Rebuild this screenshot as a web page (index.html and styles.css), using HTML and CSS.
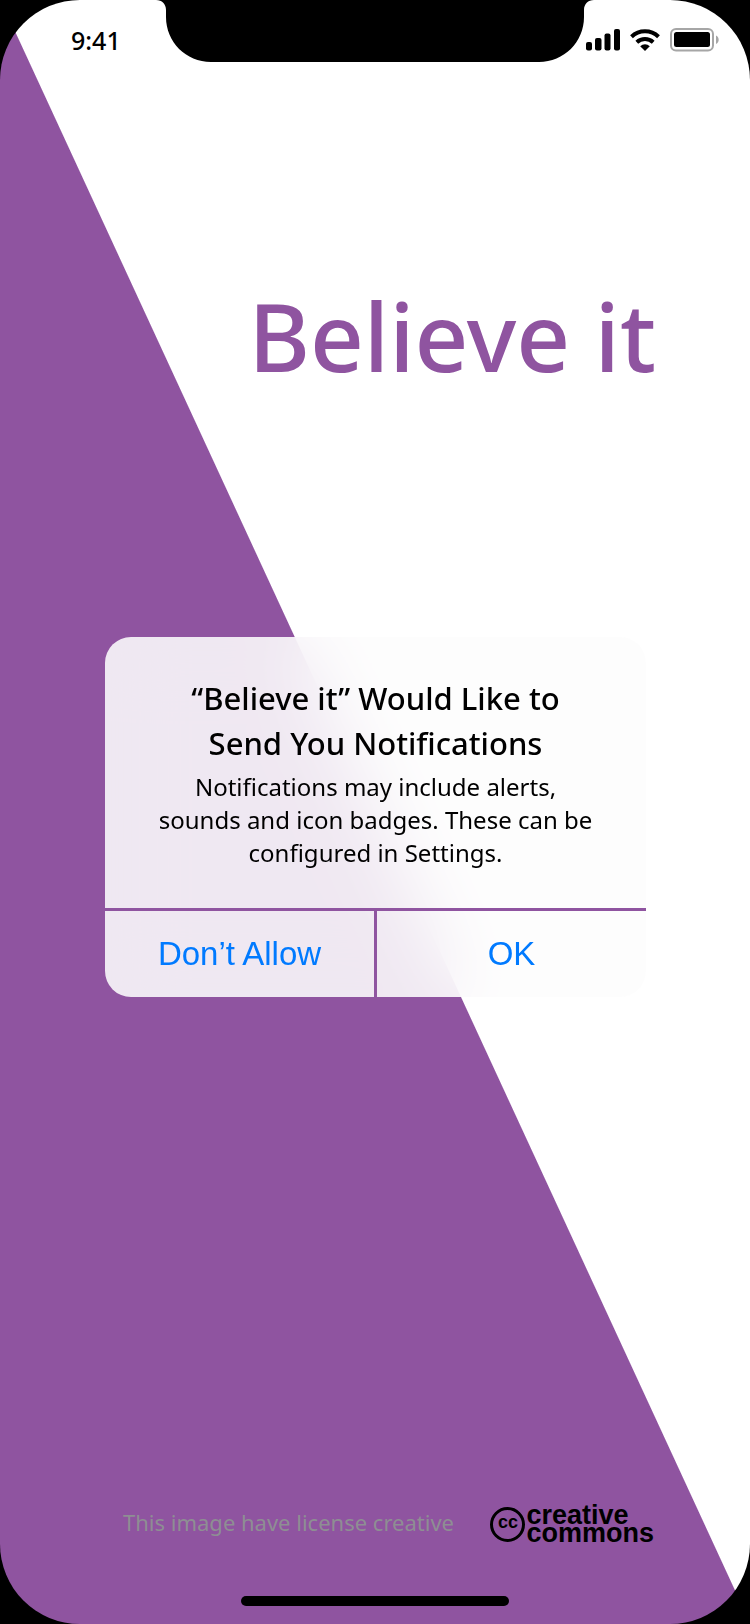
FILE: index.html
```html
<!DOCTYPE html>
<html lang="en">
<head>
<meta charset="utf-8">
<meta name="viewport" content="width=device-width, initial-scale=1">
<title>Believe it</title>
<link rel="stylesheet" href="styles.css">
</head>
<body>
<div class="screen">
  <svg class="notch" viewBox="0 0 438 62" aria-hidden="true">
    <path d="M0 0C6 0 10 4 10 10V17C10 42 30 62 55 62H383C408 62 428 42 428 17V10C428 4 432 0 438 0Z"/>
  </svg>
  <header class="status">
    <time class="clock">9:41</time>
    <div class="indicators">
      <svg class="signal" viewBox="0 0 34 22" aria-label="Signal">
        <rect x="0" y="13" width="6" height="8.500" rx="2"/>
        <rect x="9" y="9" width="6.500" height="12.500" rx="2"/>
        <rect x="18.500" y="4.500" width="6" height="17" rx="2"/>
        <rect x="28" y="0" width="6" height="21.500" rx="2"/>
      </svg>
      <svg class="wifi" viewBox="0 0 30 22" aria-label="Wi-Fi">
        <path class="arc" d="M1.500 7.700A19.500 19.500 0 0 1 28.500 7.700M6.800 13.200A12 12 0 0 1 23.200 13.200"/>
        <path d="M10.200 17.200A7.200 7.200 0 0 1 19.800 17.200L15 22Z"/>
      </svg>
      <svg class="battery" viewBox="0 0 49 24" aria-label="Battery">
        <rect class="shell" x="1" y="1" width="42" height="21.500" rx="5"/>
        <rect x="4" y="4" width="36" height="15" rx="2.500"/>
        <path class="cap" d="M46 7.500C49.600 9 49.600 14.500 46 16Z"/>
      </svg>
    </div>
  </header>
  <h1 class="brand">Believe it</h1>
  <section class="dialog" role="alertdialog" aria-labelledby="dialog-title" aria-describedby="dialog-text">
    <div class="message">
      <h2 class="dialog-title" id="dialog-title">“Believe it” Would Like to<br>Send You Notifications</h2>
      <p class="dialog-text" id="dialog-text">Notifications may include alerts,<br>sounds and icon badges. These can be<br>configured in Settings.</p>
    </div>
    <div class="actions">
      <button class="action" type="button">Don’t Allow</button>
      <button class="action" type="button">OK</button>
    </div>
  </section>
  <footer class="footer">
    <p class="license">This image have license creative</p>
    <div class="cc">
      <span class="cc-mark">cc</span>
      <span class="cc-name">creative<br>commons</span>
    </div>
  </footer>
  <div class="home"></div>
</div>
</body>
</html>
```

FILE: styles.css
```css
* {
  box-sizing: border-box;
}

body {
  margin: 0;
  background: #000;
  color: #000;
  font-family: "Chalkboard SE", "Noto Sans", sans-serif;
}

h1, h2, p {
  margin: 0;
  font-weight: 400;
}

.screen {
  position: relative;
  display: flex;
  flex-direction: column;
  min-height: 100vh;
  padding-bottom: 18px;
  border-radius: 80px;
  background: linear-gradient(to top right, #8f54a0 50%, #fff calc(50% + 1px));
}

.notch {
  position: absolute;
  top: 0;
  left: 50%;
  width: 438px;
  transform: translateX(-50%);
}

.status {
  display: flex;
  justify-content: space-between;
  align-items: center;
  height: 80px;
  padding: 0 31px 0 71px;
}

.clock {
  font-size: 25px;
  font-weight: 500;
  line-height: 32px;
}

.indicators {
  display: flex;
  align-items: center;
  gap: 10px;
}

.signal {
  width: 34px;
}

.wifi {
  width: 30px;
}

.battery {
  width: 49px;
}

.arc {
  fill: none;
  stroke: #000;
  stroke-width: 4;
}

.shell {
  fill: none;
  stroke: #a6a6a6;
  stroke-width: 2;
}

.cap {
  fill: #a6a6a6;
}

.brand {
  padding: 190px 94px 0;
  color: #8f54a0;
  font-size: 94px;
  font-weight: 500;
  line-height: 132px;
  text-align: right;
}

.dialog {
  margin: 235px 104px 0 105px;
  border-radius: 26px;
  background: rgba(253, 253, 253, 0.88);
  backdrop-filter: blur(36px);
  text-align: center;
}

.message {
  display: flex;
  flex-direction: column;
  justify-content: center;
  gap: 4px;
  height: 271px;
}

.dialog-title {
  font-size: 31px;
  font-weight: 500;
  line-height: 45px;
}

.dialog-text {
  font-size: 24px;
  line-height: 33px;
}

.actions {
  display: flex;
  border-top: 3px solid #8f54a0;
}

.action {
  box-sizing: content-box;
  flex: 1;
  height: 86px;
  padding: 0;
  border: 0;
  background: none;
  color: #007aff;
  font-family: "Liberation Sans", Arial, sans-serif;
  font-size: 33px;
}

.action + .action {
  border-left: 3px solid #8f54a0;
}

.footer {
  display: flex;
  justify-content: space-between;
  align-items: flex-start;
  margin-top: auto;
  padding: 0 96px 54px 123px;
}

.license {
  color: #8e8e93;
  font-size: 22px;
  line-height: 32px;
}

.cc {
  display: flex;
  align-items: center;
  gap: 1px;
  font-family: "Liberation Sans", Arial, sans-serif;
  font-weight: 700;
}

.cc-mark {
  width: 35px;
  height: 35px;
  border: 3px solid #000;
  border-radius: 50%;
  font-size: 18px;
  line-height: 25px;
  text-align: center;
}

.cc-name {
  font-size: 27px;
  line-height: 18px;
}

.home {
  align-self: center;
  width: 268px;
  height: 10px;
  border-radius: 5px;
  background: #000;
}
```
